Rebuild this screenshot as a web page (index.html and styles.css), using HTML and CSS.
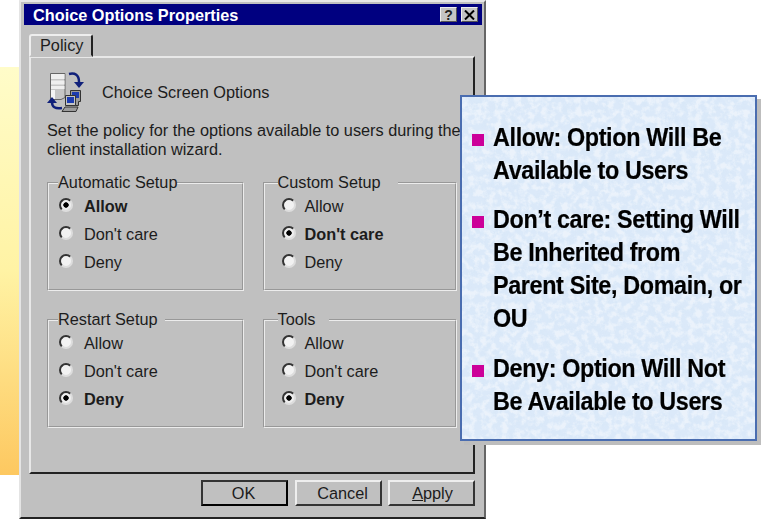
FILE: index.html
```html
<!DOCTYPE html>
<html lang="en">
<head>
<meta charset="utf-8">
<title>Choice Options Properties</title>
<link rel="stylesheet" href="styles.css">
</head>
<body>
<div class="slide">
  <div class="strip"></div>
  <div class="dialog">
    <div class="titlebar">
      <span class="title">Choice Options Properties</span>
      <span class="tb-btns"><span class="tb-btn">?</span><span class="tb-btn">
        <svg width="11" height="10" viewBox="0 0 11 10"><path d="M1 0.5L10 9.5M10 0.5L1 9.5" stroke="#000" stroke-width="2" fill="none"/></svg></span></span>
    </div>
    <div class="tabs"><div class="tab">Policy</div></div>
    <div class="panel">
      <div class="head">
        <svg class="icon" width="38" height="40" viewBox="0 0 38 40">
          <path d="M3.500 1.500h14.500v24l-4 2H3.500z" fill="#c6c6c6" stroke="#666" stroke-width="1"/>
          <path d="M4 2h13.500v5H4zM4 8.500h13.500v4H4zM4 14h13.500v3H4z" fill="#efefef"/>
          <path d="M4 18h4v9H4z" fill="#f4f4f4"/>
          <path d="M22 2c6-1.500 10 1 10 8" fill="none" stroke="#10207a" stroke-width="2.500"/>
          <path d="M27 10h10l-5 6z" fill="#10207a"/>
          <path d="M15 36c-7 1-10-1-10-6" fill="none" stroke="#10207a" stroke-width="2.500"/>
          <path d="M0 31h10l-5-6z" fill="#10207a"/>
          <path d="M23.500 18.500h10v11h-2v4h-8z" fill="#9a9a9a" stroke="#333" stroke-width="1"/>
          <path d="M25 20h7v6h-7z" fill="#1c3bb0"/>
          <path d="M18.500 23.500h10v10h-10z" fill="#c4c4c4" stroke="#333" stroke-width="1"/>
          <path d="M20 25h7v6h-7z" fill="#1c3bb0"/>
          <path d="M18 35h13l-2 4.500H15z" fill="#9c9c9c" stroke="#333" stroke-width="1"/>
        </svg>
        <span>Choice Screen Options</span>
      </div>
      <p class="desc">Set the policy for the options available to users during the client installation wizard.</p>
      <div class="groups">
        <fieldset class="group">
          <legend class="legend-tight">Automatic Setup</legend>
          <div class="opt on"><span class="radio"></span>Allow</div>
          <div class="opt"><span class="radio"></span>Don't care</div>
          <div class="opt"><span class="radio"></span>Deny</div>
        </fieldset>
        <fieldset class="group right">
          <legend class="legend-wide">Custom Setup</legend>
          <div class="opt"><span class="radio"></span>Allow</div>
          <div class="opt on"><span class="radio"></span>Don't care</div>
          <div class="opt"><span class="radio"></span>Deny</div>
        </fieldset>
        <fieldset class="group">
          <legend class="legend-mid">Restart Setup</legend>
          <div class="opt"><span class="radio"></span>Allow</div>
          <div class="opt"><span class="radio"></span>Don't care</div>
          <div class="opt on"><span class="radio"></span>Deny</div>
        </fieldset>
        <fieldset class="group right">
          <legend>Tools</legend>
          <div class="opt"><span class="radio"></span>Allow</div>
          <div class="opt"><span class="radio"></span>Don't care</div>
          <div class="opt on"><span class="radio"></span>Deny</div>
        </fieldset>
      </div>
    </div>
    <div class="actions">
      <button class="btn default">OK</button>
      <button class="btn cancel">Cancel</button>
      <button class="btn apply"><u>A</u>pply</button>
    </div>
  </div>
  <div class="callout">
    <svg class="texture" width="100%" height="100%" aria-hidden="true">
      <filter id="mottle" x="0" y="0" width="100%" height="100%">
        <feTurbulence type="fractalNoise" baseFrequency="0.1" numOctaves="5" seed="7"/>
        <feColorMatrix type="matrix" values="0 0 0 0 0.68  0 0 0 0 0.80  0 0 0 0 0.93  3 0 0 0 -1.3"/>
      </filter>
      <filter id="mottle2" x="0" y="0" width="100%" height="100%">
        <feTurbulence type="fractalNoise" baseFrequency="0.15" numOctaves="4" seed="23"/>
        <feColorMatrix type="matrix" values="0 0 0 0 1  0 0 0 0 1  0 0 0 0 1  3.400 0 0 0 -1.400"/>
      </filter>
      <rect width="100%" height="100%" filter="url(#mottle)"/>
      <rect width="100%" height="100%" filter="url(#mottle2)"/>
    </svg>
    <ul class="points">
      <li><span>Allow: Option Will Be<br>Available to Users</span></li>
      <li><span>Don’t care: Setting Will<br>Be Inherited from<br>Parent Site, Domain, or<br>OU</span></li>
      <li><span>Deny: Option Will Not<br>Be Available to Users</span></li>
    </ul>
  </div>
</div>
</body>
</html>
```
FILE: styles.css
```css
* { box-sizing: border-box; }
html, body { margin: 0; padding: 0; height: 100%; background: #fff; overflow: hidden; }
body { font-family: "Liberation Sans", Arial, sans-serif; color: #1c1c1c; }
.slide { position: relative; width: 768px; height: 519px; display: flex; align-items: flex-start; overflow: hidden; }
.strip { width: 19px; height: 408px; margin-top: 67px; flex: none; background: linear-gradient(#fffcc9 0%, #fff3a4 50%, #fdc860 100%); }
.dialog {
  width: 467px; height: 519px; flex: none; background: #c0c0c0; display: flex; flex-direction: column;
  padding: 4px 2px 0 3px;
  border-top: 2px solid #e8e8e8; border-left: 2px solid #e4e4e4;
  border-right: 2px solid #666; border-bottom: 2px solid #222;
}
.titlebar { height: 21px; background: #000080; color: #fff; display: flex; align-items: center; justify-content: space-between; padding: 0 4px 0 9px; flex: none; margin-top: -2px; }
.title { font-weight: 700; font-size: 16.300px; padding-top: 1px; }
.tb-btns { display: flex; gap: 4px; }
.tb-btn { width: 17px; height: 15px; background: #c4c4c4; color: #222; font-weight: 700; font-size: 14px; display: flex; align-items: center; justify-content: center; border: 1px solid; border-color: #eee #555 #555 #eee; }
.tabs { margin: 9px 0 0 5px; height: 22px; flex: none; display: flex; position: relative; z-index: 1; }
.tab { width: 64px; height: 23px; font-size: 16.300px; line-height: 19px; padding-left: 9px; background: #c0c0c0; border: 2px solid; border-color: #eee #222 transparent #eee; border-radius: 3px 3px 0 0; }
.panel { margin-left: 5px; width: 446px; height: 418px; flex: none; padding: 14px 0 0 16px; border: 2px solid; border-color: #e8e8e8 #222 #222 #e8e8e8; }
.head { display: flex; align-items: center; gap: 17px; height: 40px; font-size: 16.300px; }
.head span { padding-top: 1px; }
.icon { display: block; }
.desc { margin: 9px 0 0; width: 432px; font-size: 16.300px; line-height: 19px; }
.groups { display: grid; grid-template-columns: 197px 194px; column-gap: 19px; row-gap: 20.500px; margin-top: 15px; }
.group { margin: 0; padding: 2px 0 0 10px; height: 116.500px; border: 2px groove #ececec; min-width: 0; }
.group.right { padding-left: 16.500px; }
.group legend { font-size: 16.300px; line-height: 17px; padding: 0 13px 0 0; margin-left: -1px; }
.group.right legend { margin-left: -4px; }
.group legend.legend-tight { padding-right: 0; }
.group legend.legend-mid { padding-right: 7px; }
.group legend.legend-wide { padding-right: 17px; }
.opt { display: flex; align-items: center; gap: 11px; height: 27.800px; font-size: 16.300px; }
.group.right .opt { gap: 9px; }
.opt.on { font-weight: 700; }
.radio { width: 14px; height: 14px; flex: none; border-radius: 50%; background: #f2f2f2; border: 2px solid; border-color: #333 #ddd #ddd #333; margin-top: -3px; }
.opt.on .radio { background: #c8c8c8 radial-gradient(circle, #000 0 2.400px, #efefef 3px); }
.actions { display: flex; gap: 7px; margin: 6px 0 0 177px; }
.btn { width: 87px; height: 26px; padding: 0; background: #c0c0c0; color: #1c1c1c; font: 16.300px "Liberation Sans", Arial, sans-serif; border: 2px solid; border-color: #eee #333 #333 #eee; }
.btn.cancel { padding-left: 8px; }
.btn.apply { margin-left: -1px; padding-left: 2px; }
.btn.default { padding-right: 2px; border-color: #333 #000 #000 #333; }
.callout { position: absolute; left: 460px; top: 95px; width: 297px; height: 346px; background: #dbe9f9; border: 2px solid #4a6db0; box-shadow: 4px 4px 0 #bdbdbd; overflow: hidden; }
.texture { position: absolute; inset: 0; opacity: 0.45; }
.points { position: relative; list-style: none; margin: 0; padding: 24px 0 0 31px; color: #000; font-size: 25px; font-weight: 700; line-height: 33px; letter-spacing: -0.400px; -webkit-text-stroke: 0.2px #000; }
.points li { position: relative; margin-bottom: 17px; white-space: nowrap; }
.points li:first-child { margin-bottom: 16px; }
.points li span { display: inline-block; transform: scaleX(0.935); transform-origin: left center; }
.points li::before { content: ""; position: absolute; left: -21px; top: 13px; width: 11.500px; height: 11.500px; background: #cc0099; }
```
